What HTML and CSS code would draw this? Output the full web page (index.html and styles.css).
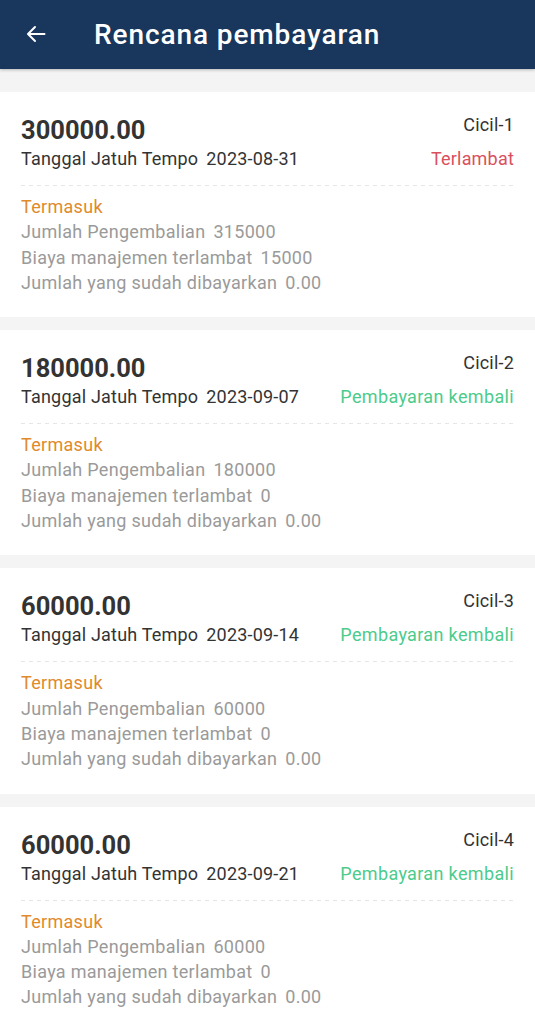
FILE: index.html
```html
<!DOCTYPE html>
<html>
  <head>
    <meta charset="utf-8" />
    <meta name="viewport" content="width=device-width, initial-scale=1" />
    <title>Rencana pembayaran</title>
    <link rel="stylesheet" href="styles.css">
  </head>
  <body>
    <header class="topbar">
      <span class="back">
        <svg width="24" height="24" viewBox="0 0 24 24">
          <path d="M20.5 12H4.5M11 5l-7 7 7 7" fill="none" stroke="#fff" stroke-width="2" stroke-linecap="round" stroke-linejoin="round" />
        </svg>
      </span>
      <h1 class="title">Rencana pembayaran</h1>
    </header>

    <main class="list">
      <div class="card">
        <div class="row">
          <span class="amount">300000.00</span>
          <span class="term">Cicil-1</span>
        </div>
        <div class="row due">
          <span><span class="label">Tanggal Jatuh Tempo</span>2023-08-31</span>
          <span class="status late">Terlambat</span>
        </div>
        <div class="dash"></div>
        <div class="details">
          <div class="incl">Termasuk</div>
          <div><span class="label">Jumlah Pengembalian</span>315000</div>
          <div><span class="label">Biaya manajemen terlambat</span>15000</div>
          <div><span class="label">Jumlah yang sudah dibayarkan</span>0.00</div>
        </div>
      </div>

      <div class="card">
        <div class="row">
          <span class="amount">180000.00</span>
          <span class="term">Cicil-2</span>
        </div>
        <div class="row due">
          <span><span class="label">Tanggal Jatuh Tempo</span>2023-09-07</span>
          <span class="status repay">Pembayaran kembali</span>
        </div>
        <div class="dash"></div>
        <div class="details">
          <div class="incl">Termasuk</div>
          <div><span class="label">Jumlah Pengembalian</span>180000</div>
          <div><span class="label">Biaya manajemen terlambat</span>0</div>
          <div><span class="label">Jumlah yang sudah dibayarkan</span>0.00</div>
        </div>
      </div>

      <div class="card">
        <div class="row">
          <span class="amount">60000.00</span>
          <span class="term">Cicil-3</span>
        </div>
        <div class="row due">
          <span><span class="label">Tanggal Jatuh Tempo</span>2023-09-14</span>
          <span class="status repay">Pembayaran kembali</span>
        </div>
        <div class="dash"></div>
        <div class="details">
          <div class="incl">Termasuk</div>
          <div><span class="label">Jumlah Pengembalian</span>60000</div>
          <div><span class="label">Biaya manajemen terlambat</span>0</div>
          <div><span class="label">Jumlah yang sudah dibayarkan</span>0.00</div>
        </div>
      </div>

      <div class="card">
        <div class="row">
          <span class="amount">60000.00</span>
          <span class="term">Cicil-4</span>
        </div>
        <div class="row due">
          <span><span class="label">Tanggal Jatuh Tempo</span>2023-09-21</span>
          <span class="status repay">Pembayaran kembali</span>
        </div>
        <div class="dash"></div>
        <div class="details">
          <div class="incl">Termasuk</div>
          <div><span class="label">Jumlah Pengembalian</span>60000</div>
          <div><span class="label">Biaya manajemen terlambat</span>0</div>
          <div><span class="label">Jumlah yang sudah dibayarkan</span>0.00</div>
        </div>
      </div>
    </main>
  </body>
</html>
```

FILE: styles.css
```css
body {
  margin: 0;
  padding: 0;
  font-family: Roboto, "Noto Sans", sans-serif;
  background-color: #f4f4f4;
  color: #333;
}
.topbar {
  height: 69px;
  background-color: #19365d;
  display: flex;
  align-items: center;
  box-shadow: 0 1px 3px rgba(0, 0, 0, 0.25);
  position: relative;
}
.back {
  display: flex;
  width: 24px;
  height: 24px;
  margin-left: 24px;
  margin-top: -2px;
}
.title {
  margin: -1px 0 0 46px;
  color: #fff;
  font-size: 28px;
  font-weight: 500;
  letter-spacing: 0.9px;
}
.list {
  padding-top: 23px;
}
.card {
  background-color: #fff;
  padding: 23px 21px 22px;
  margin-bottom: 13px;
  font-size: 18px;
  letter-spacing: 0.2px;
}
.row {
  display: flex;
  justify-content: space-between;
}
.amount {
  font-size: 25.5px;
  font-weight: 700;
  line-height: 30px;
  letter-spacing: 0;
  color: #333;
}
.term {
  line-height: 20px;
  color: #333;
}
.due {
  margin-top: 1px;
  line-height: 26px;
}
.label {
  margin-right: 8px;
}
.status.late {
  color: #d9505e;
}
.status.repay {
  color: #4ccb8c;
  letter-spacing: 0.35px;
}
.dash {
  height: 1px;
  margin-top: 13px;
  background: repeating-linear-gradient(to right, #e6e6e6 0 4px, transparent 4px 8px);
}
.details {
  margin-top: 8px;
  line-height: 25.3px;
  color: #9a9a9a;
  letter-spacing: 0.3px;
}
.incl {
  color: #e08a2c;
}
```
